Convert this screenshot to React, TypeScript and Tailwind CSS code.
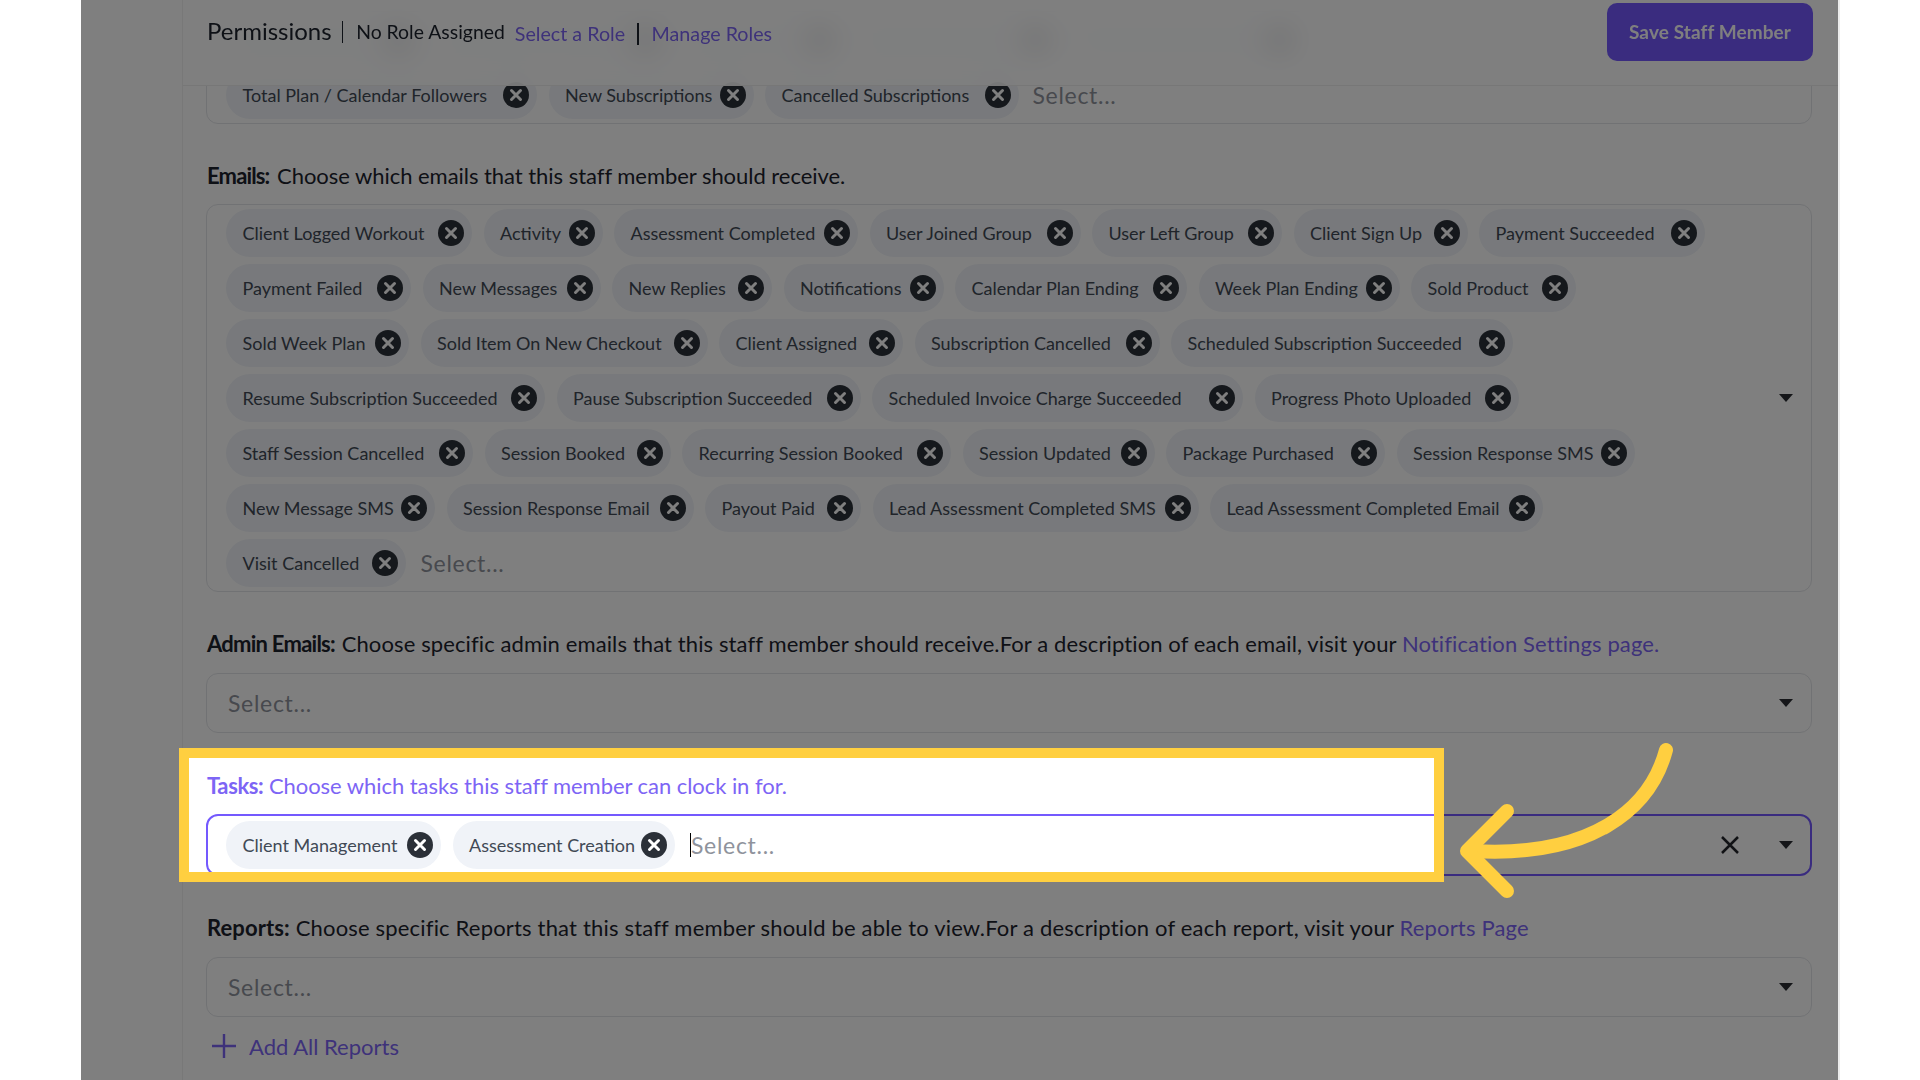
const firstRows: [string, string][][] = [
  [
    ["", "w-[132px]"],
    ["", "w-[173px]"],
    ["", "w-[101px]"],
    ["", "w-[142px]"],
    ["", "w-[171px]"],
  ],
];

const lastRow: [string, string][] = [
  ["Total Plan / Calendar Followers", "w-[249px]"],
  ["New Subscriptions", "w-[143px]"],
  ["Cancelled Subscriptions", "w-[192px]"],
];

const emailRows: [string, string][][] = [
  [
    ["Client Logged Workout", "w-[184px]"],
    ["Activity", "w-[57px]"],
    ["Assessment Completed", "w-[182px]"],
    ["User Joined Group", "w-[149px]"],
    ["User Left Group", "w-[128px]"],
    ["Client Sign Up", "w-[112px]"],
    ["Payment Succeeded", "w-[164px]"],
  ],
  [
    ["Payment Failed", "w-[123px]"],
    ["New Messages", "w-[116px]"],
    ["New Replies", "w-[98px]"],
    ["Notifications", "w-[98px]"],
    ["Calendar Plan Ending", "w-[170px]"],
    ["Week Plan Ending", "w-[139px]"],
    ["Sold Product", "w-[103px]"],
  ],
  [
    ["Sold Week Plan", "w-[121px]"],
    ["Sold Item On New Checkout", "w-[225px]"],
    ["Client Assigned", "w-[122px]"],
    ["Subscription Cancelled", "w-[183px]"],
    ["Scheduled Subscription Succeeded", "w-[280px]"],
  ],
  [
    ["Resume Subscription Succeeded", "w-[257px]"],
    ["Pause Subscription Succeeded", "w-[242px]"],
    ["Scheduled Invoice Charge Succeeded", "w-[309px]"],
    ["Progress Photo Uploaded", "w-[202px]"],
  ],
  [
    ["Staff Session Cancelled", "w-[185px]"],
    ["Session Booked", "w-[124px]"],
    ["Recurring Session Booked", "w-[207px]"],
    ["Session Updated", "w-[130px]"],
    ["Package Purchased", "w-[157px]"],
    ["Session Response SMS", "w-[176px]"],
  ],
  [
    ["New Message SMS", "w-[147px]"],
    ["Session Response Email", "w-[185px]"],
    ["Payout Paid", "w-[94px]"],
    ["Lead Assessment Completed SMS", "w-[264px]"],
    ["Lead Assessment Completed Email", "w-[271px]"],
  ],
];

function Chip({ label, width }: { label: string; width: string }) {
  return (
    <div className="flex h-12 shrink-0 items-center rounded-3xl bg-[#f0f3f8] pl-[16.5px] pr-2">
      <span className={`${width} whitespace-nowrap text-[18px] text-[#414955]`}>{label}</span>
      <span className="ml-[11.5px] flex size-[26px] items-center justify-center rounded-full bg-[#2b3038]">
        <svg width="16" height="16" viewBox="0 0 16 16" fill="none" stroke="#fff" strokeWidth="3" strokeLinecap="round">
          <path d="M3.5 3.5l9 9M12.5 3.5l-9 9" />
        </svg>
      </span>
    </div>
  );
}

function Caret() {
  return (
    <svg className="shrink-0" width="14" height="8" viewBox="0 0 14 8" fill="#2a2d33">
      <path d="M0 0h14L7 8z" />
    </svg>
  );
}

function Placeholder({ className = "" }: { className?: string }) {
  return <span className={`text-[23px] tracking-[0.7px] text-[#8f939c] ${className}`}>Select...</span>;
}

function ChipRow({ chips, children }: { chips: [string, string][]; children?: React.ReactNode }) {
  return (
    <div className="flex items-center gap-x-[11.5px]">
      {chips.map(([label, width], i) => (
        <Chip key={i} label={label} width={width} />
      ))}
      {children}
    </div>
  );
}

function SingleSelect() {
  return (
    <div className="flex h-[60px] items-center justify-between rounded-xl border border-[#e3e5e9] pl-[21px] pr-[18.5px]">
      <Placeholder />
      <Caret />
    </div>
  );
}

export default function App() {
  return (
    <div className="flex h-screen overflow-hidden bg-white font-['Lato','Liberation_Sans',sans-serif]">
      <div className="w-[81px] shrink-0" />
      <div className="relative flex w-[1759px] shrink-0 overflow-hidden border-r-2 border-[#ececec]">
        <div className="w-[102px] shrink-0 border-r border-[#f0f0f0]" />

        <div className="flex-1 pl-[23px] pr-[26px] pt-[11px] text-[#1c222d]">
          <div className="flex flex-col gap-y-[7px] rounded-xl border border-[#e3e5e9] pb-1 pl-[19px] pt-1">
            <ChipRow chips={firstRows[0]} />
            <ChipRow chips={lastRow}>
              <Placeholder className="ml-[2px]" />
            </ChipRow>
          </div>

          <p className="mb-4 ml-px mt-10 h-6 text-[22px] leading-6 tracking-[-0.04px]">
            <b className="mr-[2px] tracking-[-0.85px]">Emails:</b> Choose which emails that this staff member should receive.
          </p>
          <div className="flex items-center rounded-xl border border-[#e3e5e9] pb-1 pl-[19px] pr-[18.5px] pt-1">
            <div className="flex flex-1 flex-col gap-y-[7px]">
              {emailRows.map((row, i) => (
                <ChipRow key={i} chips={row} />
              ))}
              <ChipRow chips={[["Visit Cancelled", "w-[118px]"]]}>
                <Placeholder className="ml-[3px]" />
              </ChipRow>
            </div>
            <Caret />
          </div>

          <p className="mb-4 ml-px mt-10 h-6 whitespace-nowrap text-[22px] leading-6 tracking-[0.11px]">
            <b className="mr-px tracking-[-0.75px]">Admin Emails:</b> Choose specific admin emails that this staff member should receive.For a description of each
            email, visit your <a className="text-[#7d65f5]">Notification Settings page.</a>
          </p>
          <div className="pt-px">
            <SingleSelect />
          </div>

          <p className="mb-4 ml-px mt-[41px] h-6 text-[22px] leading-6 tracking-[-0.05px] text-[#7d65f5]">
            <b className="tracking-[-0.4px]">Tasks:</b> Choose which tasks this staff member can clock in for.
          </p>
          <div className="flex h-[62px] items-center rounded-xl border-2 border-[#7459fe] pl-[18px] pr-[17.5px]">
            <ChipRow chips={[["Client Management", "w-[153px]"], ["Assessment Creation", "w-[160px]"]]}>
              <span className="ml-[4px] h-6 w-px bg-black" />
              <Placeholder className="-ml-[11.5px]" />
            </ChipRow>
            <svg className="ml-auto mr-[39px] shrink-0" width="20" height="20" viewBox="0 0 20 20" fill="none" stroke="#22252b" strokeWidth="2.5">
              <path d="M2 2l16 16M18 2L2 18" />
            </svg>
            <Caret />
          </div>

          <p className="mb-[17px] ml-px mt-10 h-6 whitespace-nowrap text-[22px] leading-6 tracking-[0.18px]">
            <b className="tracking-[0.1px]">Reports:</b> Choose specific Reports that this staff member should be able to view.For a description of each
            report, visit your <a className="text-[#7d65f5]">Reports Page</a>
          </p>
          <SingleSelect />

          <div className="mt-[17px] flex h-6 items-center pl-[6px] text-[22px] text-[#7d65f5]">
            <svg width="24" height="24" viewBox="0 0 24 24" fill="none" stroke="currentColor" strokeWidth="2.4">
              <path d="M12 0v24M0 12h24" />
            </svg>
            <span className="ml-[13px]">Add All Reports</span>
          </div>
        </div>

        {/* sticky save bar, the row underneath shows through the blur */}
        <div className="absolute left-[102px] right-0 top-0 flex h-[86px] items-start justify-between border-b border-[#efefef] bg-white/85 pl-6 pr-[25px] pt-[3px] text-[#1c222d] backdrop-blur-[14px]">
          <div className="flex h-[58px] items-center whitespace-nowrap">
            <span className="-mt-[3px] text-[24px]">Permissions</span>
            <span className="ml-[10px] mr-[13px] h-[22px] w-[1.5px] bg-[#1c222d]" />
            <span className="text-[19.4px]">No Role Assigned</span>
            <span className="ml-[10px] mt-1 text-[19.7px] text-[#7d65f5]">Select a Role</span>
            <span className="ml-[12px] mr-[13px] mt-1 h-[22px] w-[1.5px] bg-[#1c222d]" />
            <span className="mt-1 text-[19.7px] text-[#7d65f5]">Manage Roles</span>
          </div>
          <button className="h-[58px] w-[206px] rounded-[10px] bg-[#7459fe] text-[19px] font-bold tracking-[0.1px] text-white">
            Save Staff Member
          </button>
        </div>

        {/* callout: everything outside the box is dimmed by the shadow */}
        <div className="absolute left-[98px] top-[748px] h-[134px] w-[1265px] border-[10px] border-[#ffcf40] shadow-[0_0_0_2000px_rgba(0,0,0,0.5)]" />
        <svg className="absolute left-[1360px] top-[740px]" width="240" height="160" viewBox="1441 740 240 160" fill="none" stroke="#ffcf40" strokeWidth="14" strokeLinecap="round" strokeLinejoin="round">
          <path d="M1666 750C1650 810 1590 858 1472 851" />
          <path d="M1507 811L1467 851L1507 891" />
        </svg>
      </div>
    </div>
  );
}
